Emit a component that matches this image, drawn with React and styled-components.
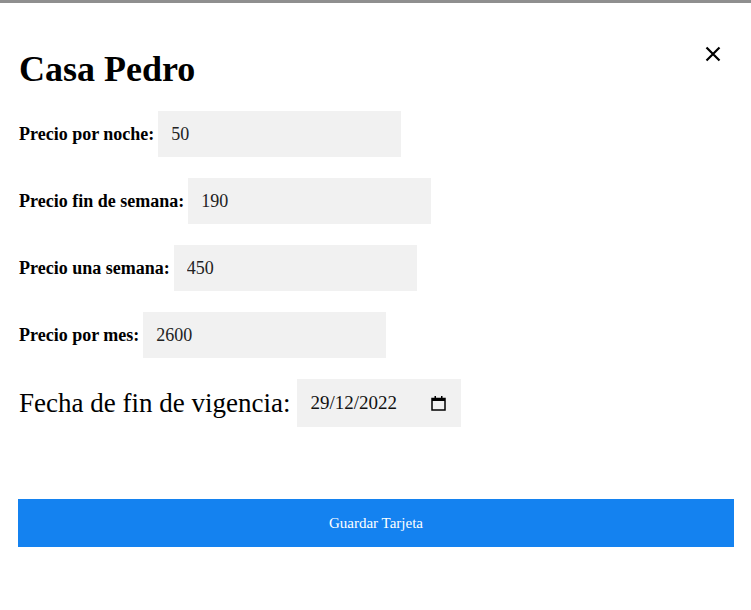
import React from "react";
import styled, { createGlobalStyle } from "styled-components";

const Global = createGlobalStyle`
  html, body { margin: 0; padding: 0; background: #fff; }
  body { font-family: "Liberation Serif", "Times New Roman", serif; color: #000; }
`;

const Page = styled.div`
  border-top: 3px solid #8f8f8f;
  padding: 0 17px 0 18px;
  min-height: 607px;
  box-sizing: border-box;
`;

const Header = styled.div`
  display: flex;
  justify-content: space-between;
  align-items: flex-start;
  padding-top: 46px;
`;

const Title = styled.h1`
  margin: 0 0 0 1px;
  font-size: 36px;
  line-height: 41px;
  font-weight: bold;
`;

const Close = styled.button`
  border: 0;
  background: none;
  padding: 0;
  margin: -3px 13px 0 0;
  width: 16px;
  height: 16px;
  display: flex;
  cursor: pointer;
`;

const Form = styled.div`
  display: flex;
  flex-direction: column;
  gap: 21px;
  margin-top: 21px;
`;

const Row = styled.label`
  display: flex;
  align-items: center;
  gap: ${(p) => (p.$big ? "7px" : "4px")};
  padding-left: 1px;
`;

const Label = styled.span`
  font-size: ${(p) => (p.$big ? "27px" : "18px")};
  font-weight: ${(p) => (p.$big ? "normal" : "bold")};
  white-space: nowrap;
`;

const Input = styled.input`
  width: 243px;
  height: 46px;
  box-sizing: border-box;
  border: 0;
  outline: none;
  background: #f1f1f1;
  padding: 0 13px;
  font-family: "Liberation Serif", "Times New Roman", serif;
  font-size: 18px;
  color: #222;
`;

const DateBox = styled.div`
  width: 164px;
  height: 48px;
  box-sizing: border-box;
  background: #f1f1f1;
  display: flex;
  align-items: center;
  justify-content: space-between;
  padding: 0 15px 0 13px;
  font-size: 19px;
  color: #111;
`;

const Button = styled.button`
  margin-top: 72px;
  width: 100%;
  height: 48px;
  border: 0;
  background: #1482f0;
  color: #fff;
  font-family: "Liberation Serif", "Times New Roman", serif;
  font-size: 15px;
  cursor: pointer;
`;

const fields = [
  ["Precio por noche:", "50"],
  ["Precio fin de semana:", "190"],
  ["Precio una semana:", "450"],
  ["Precio por mes:", "2600"],
];

export default function App() {
  return (
    <>
      <Global />
      <Page>
        <Header>
          <Title>Casa Pedro</Title>
          <Close aria-label="Cerrar">
            <svg width="16" height="16" viewBox="0 0 16 16">
              <path d="M1.5 1.5 L14.5 14.5 M14.5 1.5 L1.5 14.5" stroke="#000" strokeWidth="2.2" />
            </svg>
          </Close>
        </Header>
        <Form>
          {fields.map(([label, value]) => (
            <Row key={label}>
              <Label>{label}</Label>
              <Input defaultValue={value} />
            </Row>
          ))}
          <Row $big>
            <Label $big>Fecha de fin de vigencia:</Label>
            <DateBox>
              <span>29/12/2022</span>
              <svg width="15" height="16" viewBox="0 0 15 16">
                <rect x="1" y="3.5" width="13" height="11.5" fill="none" stroke="#000" strokeWidth="1.5" />
                <rect x="1" y="3" width="13" height="3" fill="#000" />
                <rect x="3.5" y="1" width="1.5" height="3" fill="#000" />
                <rect x="10" y="1" width="1.5" height="3" fill="#000" />
              </svg>
            </DateBox>
          </Row>
        </Form>
        <Button>Guardar Tarjeta</Button>
      </Page>
    </>
  );
}
